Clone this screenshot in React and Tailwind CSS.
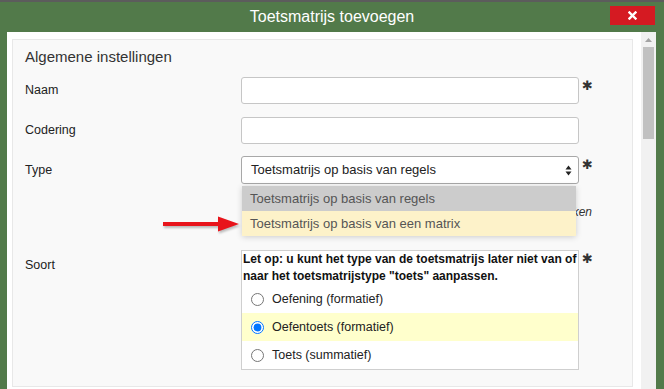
import { useState } from 'react';

const Star = () => (
  <span className="ml-[3px] self-start mt-[2px] text-[13px] leading-[14px] text-[#333] font-['DejaVu_Sans',sans-serif]">✱</span>
);

const Radio = ({ label, checked, highlight }) => (
  <label className={`flex items-center h-[28px] pl-[9px] gap-[8px] text-[12.5px] text-[#222] ${highlight ? 'bg-[#ffffcc]' : ''}`}>
    <input type="radio" name="soort" defaultChecked={checked} className="m-0 w-[13px] h-[13px]" />
    {label}
  </label>
);

const App = () => {
  const [open] = useState(true);

  return (
    <div className="w-[664px] h-[389px] overflow-hidden bg-[#527a4a] border-t-2 border-[#5c5c5c] flex flex-col font-['Liberation_Sans',Arial,sans-serif]">
      {/* Titelbalk */}
      <div className="h-[30px] shrink-0 grid grid-cols-[1fr_auto_1fr] items-center">
        <div></div>
        <div className="text-white text-[16px] leading-[20px]">Toetsmatrijs toevoegen</div>
        <div className="flex justify-end self-start pt-[4px] pr-[9px]">
          <button className="w-[45px] h-[19px] bg-[#d51a22] flex items-center justify-center">
            <svg width="9" height="9" viewBox="0 0 9 9">
              <path d="M1.5 1.5 L7.5 7.5 M7.5 1.5 L1.5 7.5" stroke="white" strokeWidth="2.4" strokeLinecap="square" />
            </svg>
          </button>
        </div>
      </div>

      {/* Inhoud */}
      <div className="flex-1 ml-[7px] mr-[8px] bg-white flex min-h-0">
        <div className="flex-1 pl-[5px] pr-[8px] pt-[7px] min-h-0">
          <div className="h-[348px] bg-[#f9f9f9] border border-[#e8e8e8] pl-[12px] pt-[8px]">
            <h2 className="text-[15px] leading-[18px] text-[#333]">Algemene instellingen</h2>

            {/* Naam */}
            <div className="flex items-center mt-[11px]">
              <div className="w-[216px] text-[12.5px] text-[#222]">Naam</div>
              <input className="w-[338px] h-[27px] bg-white border border-[#c6c6c6] rounded-[3px] px-2 focus:outline-none" />
              <Star />
            </div>

            {/* Codering */}
            <div className="flex items-center mt-[13px]">
              <div className="w-[216px] text-[12.5px] text-[#222]">Codering</div>
              <input className="w-[338px] h-[27px] bg-white border border-[#c6c6c6] rounded-[3px] px-2 focus:outline-none" />
            </div>

            {/* Type */}
            <div className="flex items-center mt-[12px]">
              <div className="w-[216px] text-[12.5px] text-[#222]">Type</div>
              <div className="relative">
                <div className="w-[338px] h-[28px] bg-white border border-[#a8a8a8] rounded-[3px] pl-[9px] pr-[6px] flex items-center justify-between text-[13px] text-[#222]">
                  <span>Toetsmatrijs op basis van regels</span>
                  <svg width="7" height="11" viewBox="0 0 7 11">
                    <path d="M3.5 0.5 L6.5 4.5 L0.5 4.5 Z M3.5 10.5 L6.5 6.5 L0.5 6.5 Z" fill="#222" />
                  </svg>
                </div>
                {open && (
                  <div className="absolute left-[1px] top-[30px] w-[334px] shadow-[0_1px_6px_rgba(0,0,0,0.18)] z-10">
                    <div className="h-[25px] bg-[#cccccc] pl-[8px] flex items-center text-[13px] text-[#555]">
                      Toetsmatrijs op basis van regels
                    </div>
                    <div className="h-[25px] bg-[#fdf2c9] pl-[8px] flex items-center text-[13px] text-[#555]">
                      Toetsmatrijs op basis van een matrix
                    </div>
                    {/* Pijl */}
                    <svg className="absolute left-[-79px] top-[30px] drop-shadow-[1px_2px_1px_rgba(0,0,0,0.25)]" width="77" height="16" viewBox="0 0 77 16">
                      <path d="M0 6 L55 6 L55 0.5 L76 8 L55 15.5 L55 10 L0 10 Z" fill="#e8141b" />
                    </svg>
                  </div>
                )}
              </div>
              <Star />
            </div>

            {/* Hulptekst achter dropdown */}
            <div className="flex mt-[21px]">
              <div className="w-[216px]"></div>
              <div className="w-[351px] text-right italic text-[12px] leading-[15px] text-[#333]">
                Kies het type dat u wilt gebruiken
              </div>
            </div>

            {/* Soort */}
            <div className="flex items-start mt-[30px]">
              <div className="w-[216px] pt-[6px] text-[12.5px] text-[#222]">Soort</div>
              <div className="w-[338px] bg-white border border-[#cfcfcf]">
                <p className="px-[1px] text-[12px] leading-[17px] font-bold text-[#111]">
                  Let op: u kunt het type van de toetsmatrijs later niet van of naar het toetsmatrijstype "toets" aanpassen.
                </p>
                <Radio label="Oefening (formatief)" />
                <Radio label="Oefentoets (formatief)" checked highlight />
                <Radio label="Toets (summatief)" />
              </div>
              <Star />
            </div>
          </div>
        </div>

        {/* Scrollbalk */}
        <div className="w-[15px] bg-[#f1f1f1] flex flex-col items-center pt-[6px]">
          <svg width="7" height="4" viewBox="0 0 7 4">
            <path d="M3.5 0 L7 4 L0 4 Z" fill="#a3a3a3" />
          </svg>
          <div className="mt-[5px] w-[11px] h-[92px] bg-[#c1c1c1]"></div>
        </div>
      </div>
    </div>
  );
};

export default App;
